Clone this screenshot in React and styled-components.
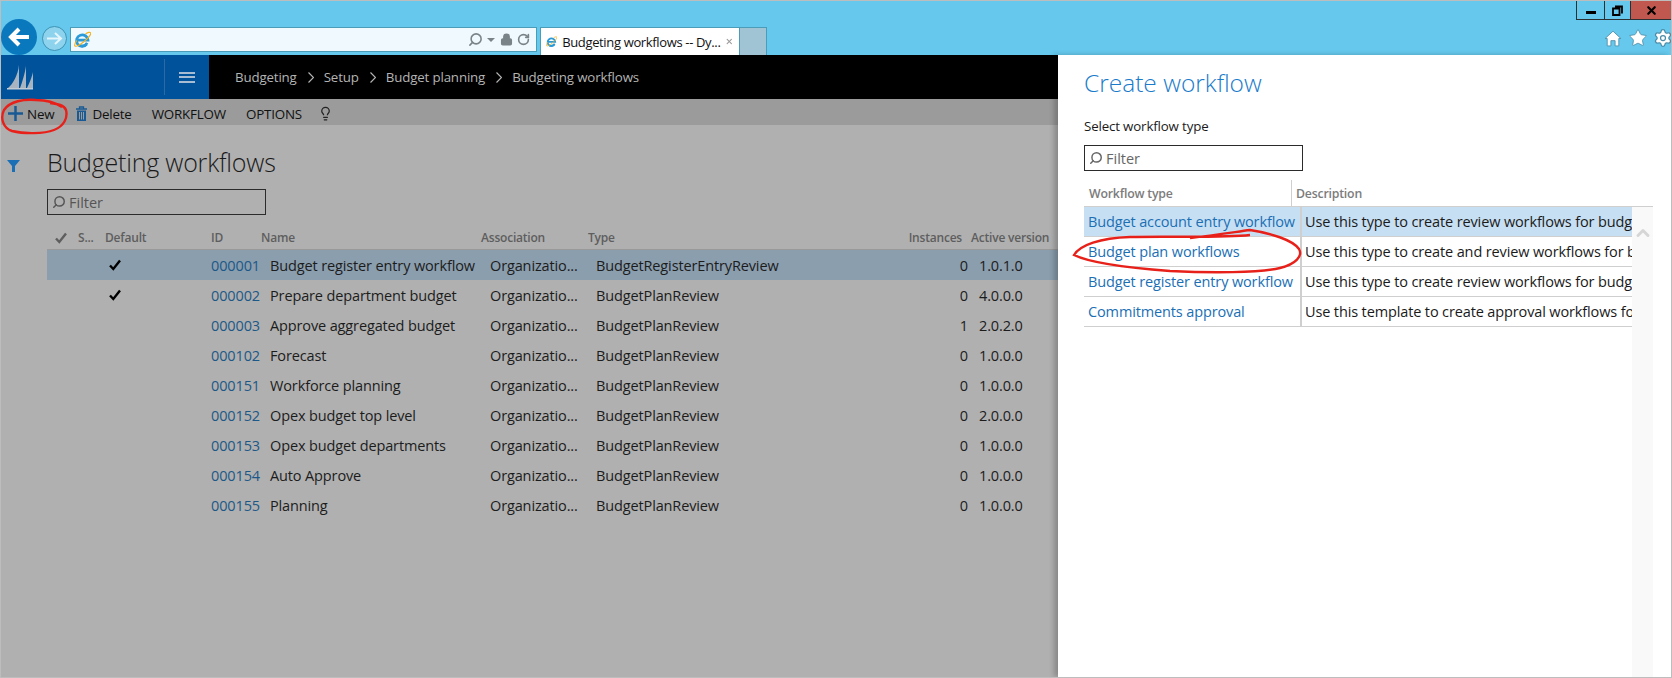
import React from "react";
import styled, { createGlobalStyle } from "styled-components";
import { Lightbulb, Search, RotateCw, Lock, Star, Settings, ChevronUp, X } from "lucide-react";

const GlobalStyle = createGlobalStyle`
  html, body { margin: 0; padding: 0; }
  body { font-family: "Open Sans", "Noto Sans", sans-serif; background: #fff; overflow: hidden; }
  * { box-sizing: border-box; }
`;

const Frame = styled.div`
  position: relative;
  width: 1672px;
  height: 678px;
  border: 1px solid #bdbdbd;
  display: flex;
  flex-direction: column;
  overflow: hidden;
`;

/* ---- browser chrome ---- */
const Chrome = styled.div`
  height: 54px;
  flex: none;
  background: #65c8ec;
  display: flex;
  align-items: flex-start;
  position: relative;
`;

const NavArea = styled.div`
  display: flex;
  align-items: center;
  height: 54px;
`;

const BackBtn = styled.div`
  width: 36px;
  height: 36px;
  border-radius: 50%;
  margin-top: 18px;
  background: #0a78bd;
  display: flex;
  align-items: center;
  justify-content: center;
`;

const ForwardBtn = styled.div`
  width: 25px;
  height: 25px;
  margin-top: 20px;
  margin-left: 5px;
  border-radius: 50%;
  border: 1px solid #3c93b4;
  background: #8ed3ee;
  display: flex;
  align-items: center;
  justify-content: center;
`;

const AddressBar = styled.div`
  width: 467px;
  height: 25px;
  margin: 26px 0 0 3px;
  background: #f0f9fd;
  border: 1px solid #4a9cb8;
  display: flex;
  align-items: center;
  padding: 0 6px 0 3px;
`;

const AddressSpacer = styled.div`
  flex: 1;
`;

const AddressTools = styled.div`
  display: flex;
  align-items: center;
  gap: 4px;
  color: #7a8488;
`;

const Caret = styled.span`
  width: 0;
  height: 0;
  border-left: 4px solid transparent;
  border-right: 4px solid transparent;
  border-top: 4px solid #7a8488;
  margin-right: 1px;
`;

const Tab = styled.div`
  width: 200px;
  height: 28px;
  margin: 26px 0 0 3px;
  background: #fff;
  border: 1px solid #4a9cb8;
  border-bottom: none;
  display: flex;
  align-items: center;
  padding: 0 5px;
  gap: 5px;
  font-size: 13px;
  letter-spacing: -0.35px;
  color: #111;
  white-space: nowrap;
`;

const TabTitle = styled.span`
  flex: 1;
`;

const NewTab = styled.div`
  width: 27px;
  height: 28px;
  margin-top: 26px;
  background: #a0c4d4;
  border: 1px solid #4a9cb8;
  border-left: none;
  border-bottom: none;
`;

const WindowButtons = styled.div`
  margin-left: auto;
  display: flex;
  height: 19px;
  border-bottom: 1px solid #2b3133;
  border-left: 1px solid #2b3133;
`;

const WinBtn = styled.div`
  width: ${(p) => p.$w}px;
  background: ${(p) => p.$bg || "transparent"};
  border-right: ${(p) => (p.$bg ? "none" : "1px solid #2b3133")};
  display: flex;
  align-items: center;
  justify-content: center;
`;

const MinGlyph = styled.span`
  width: 10px;
  height: 3px;
  margin-top: 4px;
  background: #000;
`;

const BrowserIcons = styled.div`
  position: absolute;
  right: -2px;
  top: 27px;
  display: flex;
  gap: 5px;
  color: #4a8ca8;
`;

/* ---- body ---- */
const Body = styled.div`
  flex: 1;
  display: flex;
  min-height: 0;
`;

const Left = styled.div`
  flex: 1;
  min-width: 0;
  display: flex;
  flex-direction: column;
  background: #b0b0b0;
`;

const TopNav = styled.div`
  height: 44px;
  flex: none;
  background: #000;
  display: flex;
  align-items: center;
`;

const Brand = styled.div`
  width: 208px;
  height: 44px;
  background: #00539a;
  display: flex;
  align-items: center;
  padding-left: 6px;
`;

const BrandDivider = styled.div`
  width: 1px;
  height: 36px;
  margin-left: 130px;
  background: #2a6ba6;
`;

const Burger = styled.div`
  width: 16px;
  height: 11px;
  margin-left: 14px;
  border-top: 2px solid #a8bdd2;
  border-bottom: 2px solid #a8bdd2;
  position: relative;
  &::after {
    content: "";
    position: absolute;
    left: 0;
    right: 0;
    top: 2.5px;
    height: 2px;
    background: #a8bdd2;
  }
`;

const Crumbs = styled.div`
  display: flex;
  align-items: center;
  margin-left: 26px;
  color: #b4b4b4;
  font-size: 13.3px;
  letter-spacing: -0.15px;
`;

const CrumbSep = styled.svg`
  margin: 0 10px 0 11px;
`;

const Toolbar = styled.div`
  height: 26px;
  flex: none;
  background: #9b9b9b;
  display: flex;
  align-items: center;
  padding: 3px 0 0 7px;
  color: #111;
  font-size: 13.4px;
  letter-spacing: -0.2px;
`;

const ToolItem = styled.div`
  display: flex;
  align-items: center;
  gap: ${(p) => p.$gap || 4}px;
  margin-right: ${(p) => p.$mr}px;
`;

const Content = styled.div`
  flex: 1;
  display: flex;
  min-height: 0;
`;

const FilterRail = styled.div`
  width: 46px;
  flex: none;
  padding: 30px 0 0 6px;
`;

const Main = styled.div`
  flex: 1;
  min-width: 0;
`;

const PageTitle = styled.h1`
  margin: 22px 0 0;
  font-size: 25px;
  line-height: 31px;
  font-weight: 300;
  letter-spacing: -0.2px;
  color: #1a1a1a;
`;

const FilterBox = styled.div`
  width: ${(p) => p.$w}px;
  height: 26px;
  margin-top: ${(p) => p.$mt}px;
  border: 1px solid #2b2b2b;
  display: flex;
  align-items: center;
  gap: 3px;
  padding-left: 4px;
  font-size: 14.5px;
  color: ${(p) => p.$color};
`;

const FlipSearch = styled(Search)`
  transform: scaleX(-1);
`;

const Columns = "31px 27px 106px 50px 220px 105px 272px 113px 1fr";

const HeadRow = styled.div`
  display: grid;
  grid-template-columns: ${Columns};
  height: 35px;
  align-items: center;
  padding-top: 11px;
  border-bottom: 1px solid #999;
  font-size: 12px;
  font-weight: 600;
  letter-spacing: -0.2px;
  color: #5e5e5e;
  white-space: nowrap;
`;

const CheckHead = styled.div`
  padding-left: 7px;
  display: flex;
`;

const Row = styled.div`
  display: grid;
  grid-template-columns: ${Columns};
  height: 30px;
  align-items: center;
  background: ${(p) => (p.$selected ? "#8a9eae" : "transparent")};
  font-size: 14.5px;
  letter-spacing: -0.13px;
  color: #1c1c1c;
  white-space: nowrap;
`;

const DefaultCell = styled.div`
  grid-column: 3;
  display: flex;
  padding-left: 3px;
`;

const IdCell = styled.div`
  color: #1c5887;
`;

const NameCell = styled.div`
  padding-left: 9px;
`;

const AssocCell = styled.div`
  padding-left: 9px;
`;

const TypeCell = styled.div`
  padding-left: 10px;
`;

const InstCell = styled.div`
  text-align: right;
  padding-right: 3px;
`;

const VerCell = styled.div`
  padding-left: 8px;
`;

const TypeHead = styled.div`
  padding-left: 2px;
`;

const InstHead = styled.div`
  text-align: right;
  padding-right: 9px;
`;

const VerHead = styled.div`
  margin-left: 0;
`;

/* ---- slide-in panel ---- */
const Panel = styled.div`
  width: 613px;
  flex: none;
  background: #fff;
  box-shadow: -4px 0 5px rgba(0, 0, 0, 0.22);
  padding-left: 26px;
  display: flex;
  flex-direction: column;
  position: relative;
`;

const PanelTitle = styled.h2`
  margin: 10px 0 0;
  font-size: 24.5px;
  line-height: 35px;
  font-weight: 300;
  color: #1a7bcb;
`;

const PanelLabel = styled.div`
  margin-top: 17px;
  font-size: 13.3px;
  line-height: 18px;
  letter-spacing: -0.15px;
  color: #1a1a1a;
`;

const Grid = styled.div`
  width: 569px;
  margin-top: 9px;
  display: flex;
  flex-direction: column;
`;

const GridHead = styled.div`
  display: grid;
  grid-template-columns: 207px 1fr;
  height: 27px;
  border-bottom: 1px solid #cfcfcf;
  font-size: 12.3px;
  font-weight: 600;
  letter-spacing: -0.2px;
  color: #7c7c7c;
  align-items: center;
`;

const HeadCell = styled.div`
  padding-left: ${(p) => p.$pl}px;
  height: 100%;
  display: flex;
  align-items: center;
  border-left: ${(p) => (p.$line ? "1px solid #cfcfcf" : "none")};
`;

const TypeRow = styled.div`
  width: 548px;
  height: 30px;
  display: grid;
  grid-template-columns: 216px 1fr;
  align-items: center;
  border-bottom: 1px solid #cfcfcf;
  background: ${(p) => (p.$selected ? "#c7dff2" : "#fff")};
  font-size: 14.5px;
  letter-spacing: -0.13px;
  white-space: nowrap;
  overflow: hidden;
`;

const TypeLink = styled.div`
  padding-left: 4px;
  color: #1a6fb5;
`;

const Desc = styled.div`
  height: 100%;
  display: flex;
  align-items: center;
  padding-left: 3px;
  border-left: 2px solid #cfcfcf;
  color: #1a1a1a;
  overflow: hidden;
`;

const ScrollTrack = styled.div`
  position: absolute;
  left: 574px;
  top: 152px;
  bottom: 0;
  width: 21px;
  background: #f9f9f9;
  display: flex;
  justify-content: center;
  padding-top: 16px;
  color: #d6d6d6;
`;

const Ink = styled.svg`
  position: absolute;
  left: -1px;
  top: -1px;
  pointer-events: none;
`;

const IeLogo = () => (
  <svg width="17" height="17" viewBox="0 0 20 20">
    <path d="M4.500 10.800h12a6.800 6.800 0 1 0-1.500 4.800" fill="none" stroke="#2a9ad8" strokeWidth="3.200" />
    <path d="M15.500 14a6.800 6.800 0 0 1-10 2.200" fill="none" stroke="#2a9ad8" strokeWidth="3.200" />
    <path d="M13.500 3.500c3-2 5.500-2.500 6-1.300.7 1.800-3 6.500-8 10.500s-9 6-10.300 5c-1-.8 0-3.500 2-6.500" fill="none" stroke="#f3b320" strokeWidth="1.400" />
  </svg>
);

const SailLogo = () => (
  <svg width="27" height="25" viewBox="0 0 27 25">
    <path d="M1 23C6 19 11 10 12 0V23Z" fill="#a8b4bf" />
    <path d="M13 23C15 18 18 8 19 1V23Z" fill="#a8b4bf" />
    <path d="M20 23C22 19 25 12 26 7V23Z" fill="#a8b4bf" />
    <rect x="0" y="23" width="26" height="1.500" fill="#c2cbd3" />
  </svg>
);

const Tick = ({ color = "#000", size = 14 }) => (
  <svg width={size} height={size} viewBox="0 0 14 14">
    <path d="M2 7.500l3.300 3.500L12 2.500" fill="none" stroke={color} strokeWidth="2.400" />
  </svg>
);

const Chevron = () => (
  <CrumbSep width="6" height="11" viewBox="0 0 6 11">
    <path d="M.5.500l5 5-5 5" fill="none" stroke="#b4b4b4" strokeWidth="1.200" />
  </CrumbSep>
);

const rows = [
  ["000001", "Budget register entry workflow", "BudgetRegisterEntryReview", "0", "1.0.1.0", true],
  ["000002", "Prepare department budget", "BudgetPlanReview", "0", "4.0.0.0", true],
  ["000003", "Approve aggregated budget", "BudgetPlanReview", "1", "2.0.2.0"],
  ["000102", "Forecast", "BudgetPlanReview", "0", "1.0.0.0"],
  ["000151", "Workforce planning", "BudgetPlanReview", "0", "1.0.0.0"],
  ["000152", "Opex budget top level", "BudgetPlanReview", "0", "2.0.0.0"],
  ["000153", "Opex budget departments", "BudgetPlanReview", "0", "1.0.0.0"],
  ["000154", "Auto Approve", "BudgetPlanReview", "0", "1.0.0.0"],
  ["000155", "Planning", "BudgetPlanReview", "0", "1.0.0.0"],
];

const types = [
  ["Budget account entry workflow", "Use this type to create review workflows for budg"],
  ["Budget plan workflows", "Use this type to create and review workflows for b"],
  ["Budget register entry workflow", "Use this type to create review workflows for budg"],
  ["Commitments approval", "Use this template to create approval workflows fo"],
];

export default function App() {
  return (
    <Frame>
      <GlobalStyle />
      <Chrome>
        <NavArea>
          <BackBtn>
            <svg width="24" height="22" viewBox="0 0 24 22">
              <path d="M22 11H5M12 3l-8 8 8 8" fill="none" stroke="#fff" strokeWidth="4" />
            </svg>
          </BackBtn>
          <ForwardBtn>
            <svg width="17" height="15" viewBox="0 0 17 15">
              <path d="M1 7.500h13M9 2l6 5.500L9 13" fill="none" stroke="#e4f5fc" strokeWidth="2" />
            </svg>
          </ForwardBtn>
        </NavArea>
        <AddressBar>
          <IeLogo />
          <AddressSpacer />
          <AddressTools>
            <FlipSearch size={15} strokeWidth={2.5} />
            <Caret />
            <Lock size={13} fill="#7a8488" strokeWidth={2.5} />
            <RotateCw size={13} strokeWidth={3} />
          </AddressTools>
        </AddressBar>
        <Tab>
          <IeLogo />
          <TabTitle>Budgeting workflows -- Dy...</TabTitle>
          <X size={13} color="#9a9a9a" strokeWidth={3} />
        </Tab>
        <NewTab />
        <WindowButtons>
          <WinBtn $w={28}><MinGlyph /></WinBtn>
          <WinBtn $w={26}>
            <svg width="11" height="11" viewBox="0 0 11 11">
              <path d="M3 1.500h7v7M1 3.500h6.500V10H1z" fill="none" stroke="#000" strokeWidth="1.800" />
            </svg>
          </WinBtn>
          <WinBtn $w={40} $bg="#c0584f">
            <X size={13} color="#000" strokeWidth={4} />
          </WinBtn>
        </WindowButtons>
        <BrowserIcons>
          <svg width="20" height="20" viewBox="-1 -1 19 19">
            <path d="M1 9l7.500-7L16 9h-2v7h-3.500v-5h-4v5H3V9z" fill="#fff" stroke="#4a8ca8" strokeWidth="0.800" />
          </svg>
          <Star size={20} fill="#fff" strokeWidth={1} />
          <Settings size={20} fill="#fff" strokeWidth={1.5} />
        </BrowserIcons>
      </Chrome>
      <Body>
        <Left>
          <TopNav>
            <Brand>
              <SailLogo />
              <BrandDivider />
              <Burger />
            </Brand>
            <Crumbs>
              Budgeting<Chevron />Setup<Chevron />Budget planning<Chevron />Budgeting workflows
            </Crumbs>
          </TopNav>
          <Toolbar>
            <ToolItem $mr={20}>
              <svg width="15" height="15" viewBox="0 0 15 15">
                <path d="M7.500 0v15M0 7.500h15" stroke="#1a5a94" strokeWidth="2.500" />
              </svg>
              New
            </ToolItem>
            <ToolItem $mr={20} $gap={3}>
              <svg width="15" height="16" viewBox="0 0 15 16">
                <path d="M2 3h11M5.500 3V1h4v2" fill="none" stroke="#1a5a94" strokeWidth="1.300" />
                <path d="M3 4.500h9V15H3z" fill="#1a5a94" />
                <path d="M5.500 6v7.500M7.500 6v7.500M9.500 6v7.500" stroke="#9b9b9b" />
              </svg>
              Delete
            </ToolItem>
            <ToolItem $mr={20}>WORKFLOW</ToolItem>
            <ToolItem $mr={16}>OPTIONS</ToolItem>
            <Lightbulb size={15} color="#222" />
          </Toolbar>
          <Content>
            <FilterRail>
              <svg width="13" height="12" viewBox="0 0 13 12">
                <path d="M0 0h13L8 6v6H5V6z" fill="#1a6fb5" />
              </svg>
            </FilterRail>
            <Main>
              <PageTitle>Budgeting workflows</PageTitle>
              <FilterBox $w={219} $mt={11} $color="#555">
                <FlipSearch size={14} strokeWidth={2.5} color="#555" />
                Filter
              </FilterBox>
              <HeadRow>
                <CheckHead><Tick color="#5e5e5e" /></CheckHead>
                <div>S...</div>
                <div>Default</div>
                <div>ID</div>
                <div>Name</div>
                <div>Association</div>
                <TypeHead>Type</TypeHead>
                <InstHead>Instances</InstHead>
                <VerHead>Active version</VerHead>
              </HeadRow>
              {rows.map((r) => (
                <Row key={r[0]} $selected={r[0] === "000001"}>
                  <DefaultCell>{r[5] && <Tick />}</DefaultCell>
                  <IdCell>{r[0]}</IdCell>
                  <NameCell>{r[1]}</NameCell>
                  <AssocCell>Organizatio...</AssocCell>
                  <TypeCell>{r[2]}</TypeCell>
                  <InstCell>{r[3]}</InstCell>
                  <VerCell>{r[4]}</VerCell>
                </Row>
              ))}
            </Main>
          </Content>
        </Left>
        <Panel>
          <PanelTitle>Create workflow</PanelTitle>
          <PanelLabel>Select workflow type</PanelLabel>
          <FilterBox $w={219} $mt={10} $color="#666">
            <FlipSearch size={14} strokeWidth={2.5} color="#666" />
            Filter
          </FilterBox>
          <Grid>
            <GridHead>
              <HeadCell $pl={5}>Workflow type</HeadCell>
              <HeadCell $pl={4} $line>Description</HeadCell>
            </GridHead>
            {types.map((t, i) => (
              <TypeRow key={t[0]} $selected={i === 0}>
                <TypeLink>{t[0]}</TypeLink>
                <Desc>{t[1]}</Desc>
              </TypeRow>
            ))}
          </Grid>
          <ScrollTrack>
            <ChevronUp size={20} strokeWidth={3.5} />
          </ScrollTrack>
        </Panel>
      </Body>
      <Ink width="1672" height="678" viewBox="0 0 1672 678">
        <path d="M62 107C56 103 46 100 36 100C24 99 10 101 4 110C0 118 3 128 12 131C24 134 44 134 54 130C64 126 68 118 66 110C64 105 58 104 50 103" fill="none" stroke="#e8201a" strokeWidth="2.400" />
        <path d="M1250 235C1225 238 1160 236 1130 237C1100 238 1080 245 1074 255C1090 263 1130 268 1170 271C1210 273 1260 273 1280 268C1296 264 1303 256 1299 249C1293 240 1270 233 1250 230C1235 232 1215 235 1190 238" fill="none" stroke="#e8201a" strokeWidth="2.400" />
      </Ink>
    </Frame>
  );
}
